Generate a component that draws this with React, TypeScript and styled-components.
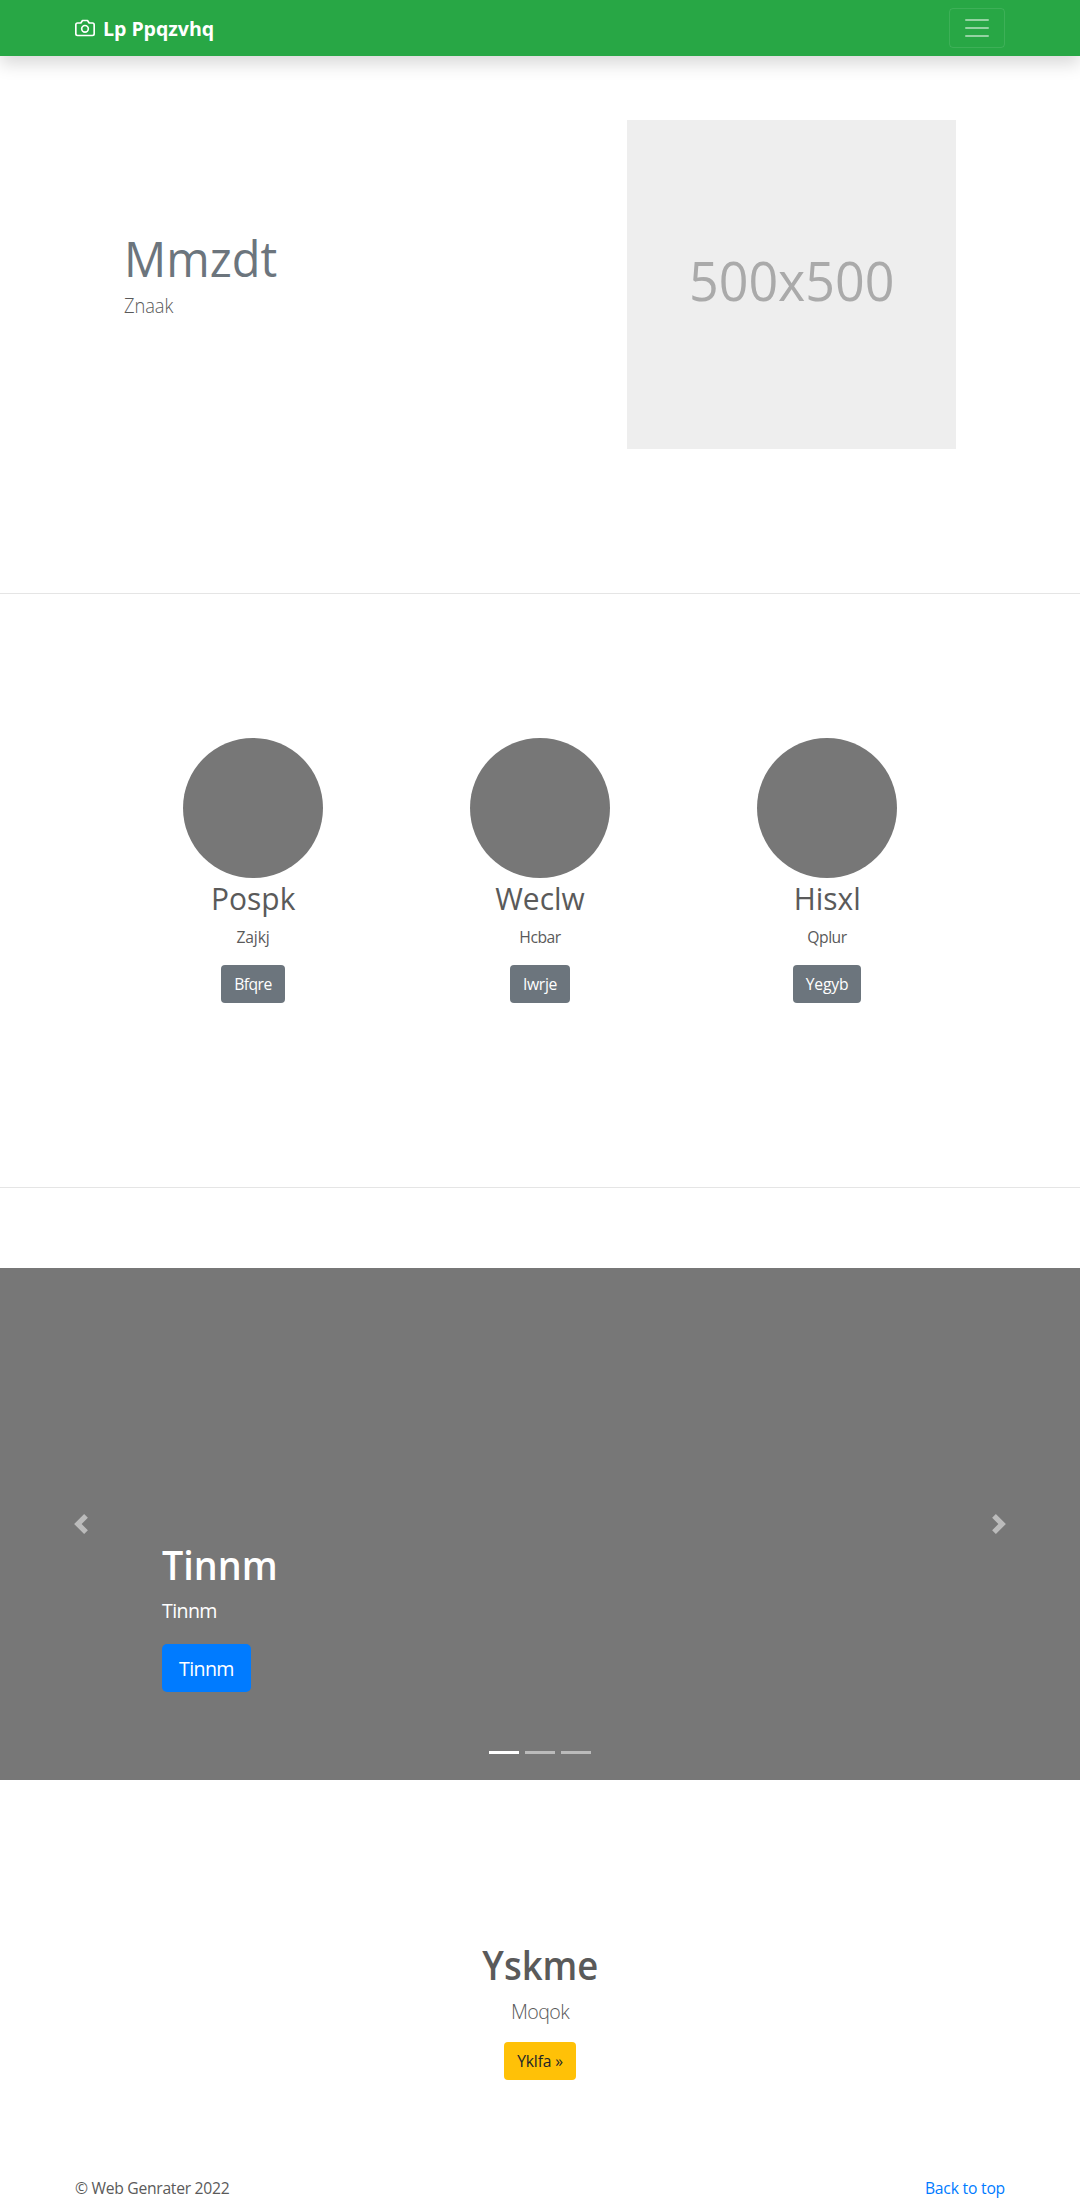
import React from "react";
import styled, { createGlobalStyle } from "styled-components";

const Global = createGlobalStyle`
  *, *::before, *::after { box-sizing: border-box; }
  body {
    margin: 0;
    background: #fff;
    color: #5a5a5a;
    font-family: "Open Sans", "Noto Sans", sans-serif;
    font-size: 15.7px;
    line-height: 24px;
  }
  h1, h2, p { margin: 0; }
  a { text-decoration: none; }
`;

const Navbar = styled.header`
  position: relative;
  z-index: 1;
  display: flex;
  align-items: center;
  justify-content: space-between;
  height: 56px;
  padding: 0 75px;
  background: #28a745;
  box-shadow: 0 8px 16px rgba(0, 0, 0, 0.15);
`;

const Brand = styled.a`
  display: flex;
  align-items: center;
  gap: 8px;
  color: #fff;
  font-size: 19.6px;
  line-height: 30px;
  font-weight: 700;
  letter-spacing: -0.06px;
`;

const BrandName = styled.span`
  padding-top: 2px;
`;

const Toggler = styled.button`
  display: flex;
  align-items: center;
  justify-content: center;
  width: 56px;
  height: 40px;
  padding: 0;
  background: transparent;
  border: 1px solid rgba(255, 255, 255, 0.1);
  border-radius: 4px;
`;

const Hero = styled.section`
  display: flex;
  justify-content: space-between;
  align-items: flex-start;
  height: 537px;
  padding: 64px 124px 0;
`;

const HeroText = styled.div`
  padding-top: 108px;
`;

const HeroTitle = styled.h1`
  color: #6c757d;
  font-size: 49px;
  font-weight: 400;
  line-height: 60px;
  transform: scaleX(0.958);
  transform-origin: left;
`;

const Lead = styled.p<{ $spacing: number; $weight?: number }>`
  font-size: 19.6px;
  font-weight: ${(p) => p.$weight ?? 300};
  line-height: 30px;
  letter-spacing: ${(p) => p.$spacing}px;
`;

const HeroLead = styled(Lead)`
  margin-top: 3px;
  transform: scaleX(0.935);
  transform-origin: left;
`;

const Placeholder = styled.div`
  display: flex;
  align-items: center;
  justify-content: center;
  width: 329px;
  height: 329px;
  padding-bottom: 10px;
  background: #eee;
  color: #aaa;
  font-size: 55.5px;
  line-height: 60px;
`;

const PlaceholderLabel = styled.span`
  transform: scaleX(0.937);
`;

const Divider = styled.hr`
  height: 1px;
  margin: 0;
  border: 0;
  background: rgba(0, 0, 0, 0.1);
`;

const Features = styled.section`
  display: flex;
  width: 861px;
  height: 593px;
  margin: 0 auto;
  padding-top: 144px;
`;

const Feature = styled.article`
  display: flex;
  flex: 1;
  flex-direction: column;
  align-items: center;
`;

const Circle = styled.div`
  width: 140px;
  height: 140px;
  border-radius: 50%;
  background: #777;
`;

const FeatureTitle = styled.h2`
  font-size: 31.4px;
  font-weight: 400;
  line-height: 39px;
  transform: scaleX(0.953);
`;

const FeatureText = styled.p<{ $spacing: number }>`
  margin: 8px 0 16px;
  letter-spacing: ${(p) => p.$spacing}px;
`;

const tones = {
  secondary: ["#6c757d", "#fff"],
  primary: ["#007bff", "#fff"],
  warning: ["#ffc107", "#212529"],
} as const;

const Button = styled.a<{ $tone: keyof typeof tones; $spacing: number; $large?: boolean }>`
  display: inline-block;
  padding: ${(p) => (p.$large ? "10px 17px 8px" : "7px 13px")};
  border-radius: ${(p) => (p.$large ? 5 : 4)}px;
  background: ${(p) => tones[p.$tone][0]};
  color: ${(p) => tones[p.$tone][1]};
  font-size: ${(p) => (p.$large ? 19.6 : 15.7)}px;
  line-height: ${(p) => (p.$large ? 30 : 24)}px;
  letter-spacing: ${(p) => p.$spacing}px;
`;

const Carousel = styled.section`
  display: grid;
  grid-template-columns: 162px 1fr 162px;
  height: 512px;
  margin-top: 80px;
  background: #777;
  color: #fff;
`;

const Control = styled.a`
  display: flex;
  align-items: center;
  justify-content: center;
  color: #fff;
  opacity: 0.5;
`;

const Slide = styled.div`
  display: flex;
  flex-direction: column;
  align-items: flex-start;
  padding-top: 273px;
`;

const StrongTitle = styled.h2<{ $stretch: number }>`
  font-size: 39.2px;
  font-weight: 600;
  line-height: 48px;
  transform: scaleX(${(p) => p.$stretch});
`;

const SlideTitle = styled(StrongTitle)`
  transform-origin: left;
`;

const SlideLead = styled(Lead)`
  margin: 7px 0 18px;
`;

const Indicators = styled.div`
  display: flex;
  align-self: center;
  gap: 6px;
  margin-top: 59px;
`;

const Indicator = styled.span<{ $active?: boolean }>`
  width: 30px;
  height: 3px;
  background: #fff;
  opacity: ${(p) => (p.$active ? 1 : 0.5)};
`;

const CallToAction = styled.section`
  display: flex;
  flex-direction: column;
  align-items: center;
  height: 396px;
  padding-top: 161px;
`;

const ActionLead = styled(Lead)`
  margin: 8px 0 15px;
`;

const Footer = styled.footer`
  display: flex;
  justify-content: space-between;
  height: 24px;
  padding: 0 75px;
`;

const Copyright = styled.p`
  letter-spacing: -0.29px;
`;

const TopLink = styled.a`
  color: #007bff;
  letter-spacing: -0.21px;
`;

const features = [
  { title: "Pospk", text: "Zajkj", textSpacing: -0.15, action: "Bfqre", actionSpacing: -0.53 },
  { title: "Weclw", text: "Hcbar", textSpacing: -0.5, action: "Iwrje", actionSpacing: -0.38 },
  { title: "Hisxl", text: "Qplur", textSpacing: -0.5, action: "Yegyb", actionSpacing: -0.2 },
];

const CameraIcon = () => (
  <svg width="20" height="20" viewBox="0 0 24 24" fill="none" stroke="currentColor" strokeWidth="2" strokeLinecap="round" strokeLinejoin="round">
    <path d="M23 19a2 2 0 0 1-2 2H3a2 2 0 0 1-2-2V8a2 2 0 0 1 2-2h4l2-3h6l2 3h4a2 2 0 0 1 2 2z" />
    <circle cx="12" cy="13" r="4" />
  </svg>
);

const MenuIcon = () => (
  <svg width="30" height="30" viewBox="0 0 30 30">
    <path d="M4 7h22M4 15h22M4 23h22" stroke="rgba(255,255,255,0.5)" strokeWidth="2" strokeLinecap="round" />
  </svg>
);

const Chevron = ({ d }: { d: string }) => (
  <svg width="20" height="20" viewBox="0 0 8 8" fill="currentColor">
    <path d={d} />
  </svg>
);

export default function App() {
  return (
    <>
      <Global />
      <Navbar>
        <Brand href="#">
          <CameraIcon />
          <BrandName>Lp Ppqzvhq</BrandName>
        </Brand>
        <Toggler aria-label="Toggle navigation">
          <MenuIcon />
        </Toggler>
      </Navbar>
      <main>
        <Hero>
          <HeroText>
            <HeroTitle>Mmzdt</HeroTitle>
            <HeroLead $spacing={-0.1}>Znaak</HeroLead>
          </HeroText>
          <Placeholder>
            <PlaceholderLabel>500x500</PlaceholderLabel>
          </Placeholder>
        </Hero>
        <Divider />
        <Features>
          {features.map((f) => (
            <Feature key={f.title}>
              <Circle />
              <FeatureTitle>{f.title}</FeatureTitle>
              <FeatureText $spacing={f.textSpacing}>{f.text}</FeatureText>
              <Button href="#" $tone="secondary" $spacing={f.actionSpacing}>
                {f.action}
              </Button>
            </Feature>
          ))}
        </Features>
        <Divider />
        <Carousel>
          <Control href="#" aria-label="Previous">
            <Chevron d="M5.25 0l-4 4 4 4 1.5-1.5L4.25 4l2.5-2.5L5.25 0z" />
          </Control>
          <Slide>
            <SlideTitle $stretch={0.962}>Tinnm</SlideTitle>
            <SlideLead $spacing={-0.62} $weight={400}>Tinnm</SlideLead>
            <Button href="#" $tone="primary" $large $spacing={-0.62}>
              Tinnm
            </Button>
            <Indicators>
              <Indicator $active />
              <Indicator />
              <Indicator />
            </Indicators>
          </Slide>
          <Control href="#" aria-label="Next">
            <Chevron d="M2.75 0l-1.5 1.5L3.75 4l-2.5 2.5L2.75 8l4-4-4-4z" />
          </Control>
        </Carousel>
        <CallToAction>
          <StrongTitle $stretch={0.93}>Yskme</StrongTitle>
          <ActionLead $spacing={-0.6}>Moqok</ActionLead>
          <Button href="#" $tone="warning" $spacing={-0.18}>
            Yklfa »
          </Button>
        </CallToAction>
      </main>
      <Footer>
        <Copyright>© Web Genrater 2022</Copyright>
        <TopLink href="#">Back to top</TopLink>
      </Footer>
    </>
  );
}
